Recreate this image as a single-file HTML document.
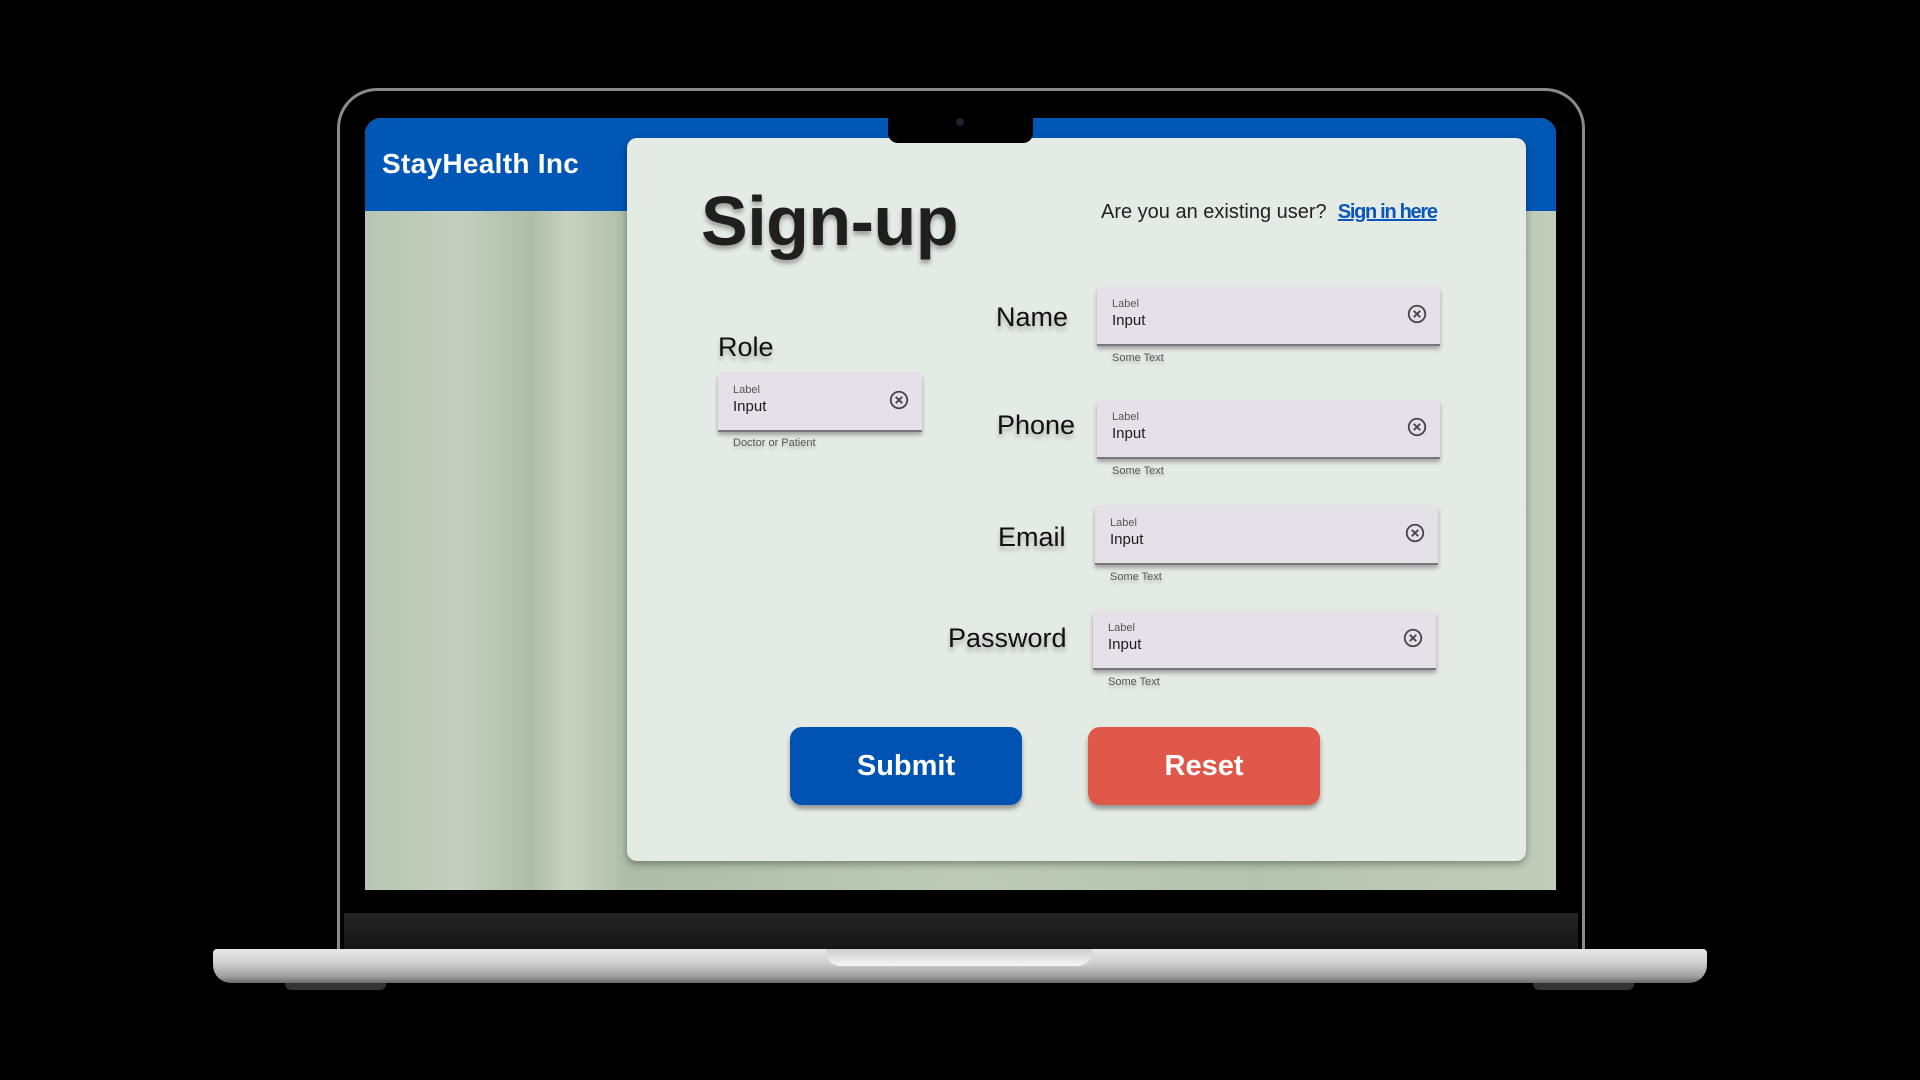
<!DOCTYPE html>
<html><head><meta charset="utf-8"><style>
*{margin:0;padding:0;box-sizing:border-box}
body{width:1920px;height:1080px;background:#000;position:relative;overflow:hidden;font-family:"Liberation Sans",sans-serif}
.a{position:absolute}
.bezel{left:337px;top:88px;width:1248px;height:880px;border-radius:40px 40px 0 0;background:#000;border:3px solid #8a8a8a;border-bottom:none}
.screen{left:365px;top:118px;width:1191px;height:772px;border-radius:16px 16px 0 0;overflow:hidden;background:linear-gradient(90deg,#b8c6b3 0%,#c3cfbf 8%,#aebda8 14%,#c8d3c2 17%,#aebda8 22%,#bccab6 50%,#b4c3ae 75%,#c1cdbb 100%)}
.hdr{left:0;top:0;width:100%;height:93px;background:#0057b5}
.brand{left:17px;top:30px;color:#fff;font-weight:bold;font-size:28px;letter-spacing:0.3px}
.notch{left:888px;top:118px;width:145px;height:25px;background:#000;border-radius:0 0 10px 10px;z-index:5}
.card{left:627px;top:138px;width:899px;height:723px;background:#e4eae4;border-radius:10px;box-shadow:0 3px 8px rgba(0,0,0,.35)}
.t{color:#1f1f1f;text-shadow:0 4px 4px rgba(0,0,0,.3)}
.lbl{font-size:27px;color:#111;text-shadow:0 4px 4px rgba(0,0,0,.25)}
.box{background:#e6e0e8;border-bottom:2px solid #79747e;border-radius:4px 4px 0 0;box-shadow:0 3px 4px rgba(0,0,0,.3);height:59px}
.box .l{position:absolute;left:15px;top:11px;font-size:11px;color:#555}
.box .i{position:absolute;left:15px;top:25px;font-size:15px;color:#1d1b20}
.box svg{position:absolute;right:12px;top:16px}
.help{font-size:11px;color:#555;text-shadow:0 3px 3px rgba(0,0,0,.2)}
.btn{width:232px;height:78px;border-radius:12px;color:#fff;font-weight:bold;font-size:29px;display:flex;align-items:center;justify-content:center;box-shadow:0 4px 5px rgba(0,0,0,.35)}
</style></head><body>
<div class="a bezel"></div>
<div class="a screen">
 <div class="a hdr"></div>
 <div class="a brand">StayHealth Inc</div>
</div>
<div class="a notch"><div class="a" style="left:68px;top:0;width:8px;height:8px;border-radius:50%;background:#1a2230"></div></div>
<div class="a" style="left:344px;top:890px;width:1234px;height:23px;background:#000"></div>
<div class="a" style="left:344px;top:913px;width:1234px;height:36px;background:linear-gradient(#252525,#161616)"></div>
<div class="a" style="left:213px;top:949px;width:1494px;height:34px;border-radius:4px 4px 18px 18px;background:linear-gradient(#e8e8e8,#d0d0d0 40%,#a0a0a0 80%,#6a6a6a)"></div>
<div class="a" style="left:826px;top:949px;width:266px;height:17px;border-radius:0 0 14px 14px;background:linear-gradient(#cfcfcf,#f5f5f5)"></div>
<div class="a" style="left:285px;top:983px;width:101px;height:7px;background:#333;border-radius:0 0 6px 6px"></div>
<div class="a" style="left:1533px;top:983px;width:101px;height:7px;background:#333;border-radius:0 0 6px 6px"></div>

<div class="a card"></div>
<div class="a t" style="left:701px;top:186px;font-size:70px;font-weight:bold;line-height:1;letter-spacing:-0.5px">Sign-up</div>
<div class="a" style="left:1101px;top:201px;font-size:20px;color:#222">Are you an existing user?&nbsp; <span style="color:#0a57b8;font-weight:bold;text-decoration:underline;letter-spacing:-1.3px">Sign in here</span></div>

<div class="a lbl" style="left:718px;top:332px">Role</div>
<div class="a lbl" style="left:996px;top:302px">Name</div>
<div class="a lbl" style="left:997px;top:410px">Phone</div>
<div class="a lbl" style="left:998px;top:522px">Email</div>
<div class="a lbl" style="left:948px;top:623px">Password</div>

<div class="a box" style="left:718px;top:373px;width:204px"><span class="l">Label</span><span class="i">Input</span><svg width="22" height="22" viewBox="0 0 24 24"><circle cx="12" cy="12" r="9" fill="none" stroke="#49454f" stroke-width="2"/><path d="M8.5 8.5l7 7M15.5 8.5l-7 7" stroke="#49454f" stroke-width="2"/></svg></div>
<div class="a help" style="left:733px;top:437px">Doctor or Patient</div>

<div class="a box" style="left:1097px;top:287px;width:343px"><span class="l">Label</span><span class="i">Input</span><svg width="22" height="22" viewBox="0 0 24 24"><circle cx="12" cy="12" r="9" fill="none" stroke="#49454f" stroke-width="2"/><path d="M8.5 8.5l7 7M15.5 8.5l-7 7" stroke="#49454f" stroke-width="2"/></svg></div>
<div class="a help" style="left:1112px;top:352px">Some Text</div>

<div class="a box" style="left:1097px;top:400px;width:343px"><span class="l">Label</span><span class="i">Input</span><svg width="22" height="22" viewBox="0 0 24 24"><circle cx="12" cy="12" r="9" fill="none" stroke="#49454f" stroke-width="2"/><path d="M8.5 8.5l7 7M15.5 8.5l-7 7" stroke="#49454f" stroke-width="2"/></svg></div>
<div class="a help" style="left:1112px;top:465px">Some Text</div>

<div class="a box" style="left:1095px;top:506px;width:343px"><span class="l">Label</span><span class="i">Input</span><svg width="22" height="22" viewBox="0 0 24 24"><circle cx="12" cy="12" r="9" fill="none" stroke="#49454f" stroke-width="2"/><path d="M8.5 8.5l7 7M15.5 8.5l-7 7" stroke="#49454f" stroke-width="2"/></svg></div>
<div class="a help" style="left:1110px;top:571px">Some Text</div>

<div class="a box" style="left:1093px;top:611px;width:343px"><span class="l">Label</span><span class="i">Input</span><svg width="22" height="22" viewBox="0 0 24 24"><circle cx="12" cy="12" r="9" fill="none" stroke="#49454f" stroke-width="2"/><path d="M8.5 8.5l7 7M15.5 8.5l-7 7" stroke="#49454f" stroke-width="2"/></svg></div>
<div class="a help" style="left:1108px;top:676px">Some Text</div>

<div class="a btn" style="left:790px;top:727px;background:#0053b3">Submit</div>
<div class="a btn" style="left:1088px;top:727px;background:#e0584a">Reset</div>
</body></html>
